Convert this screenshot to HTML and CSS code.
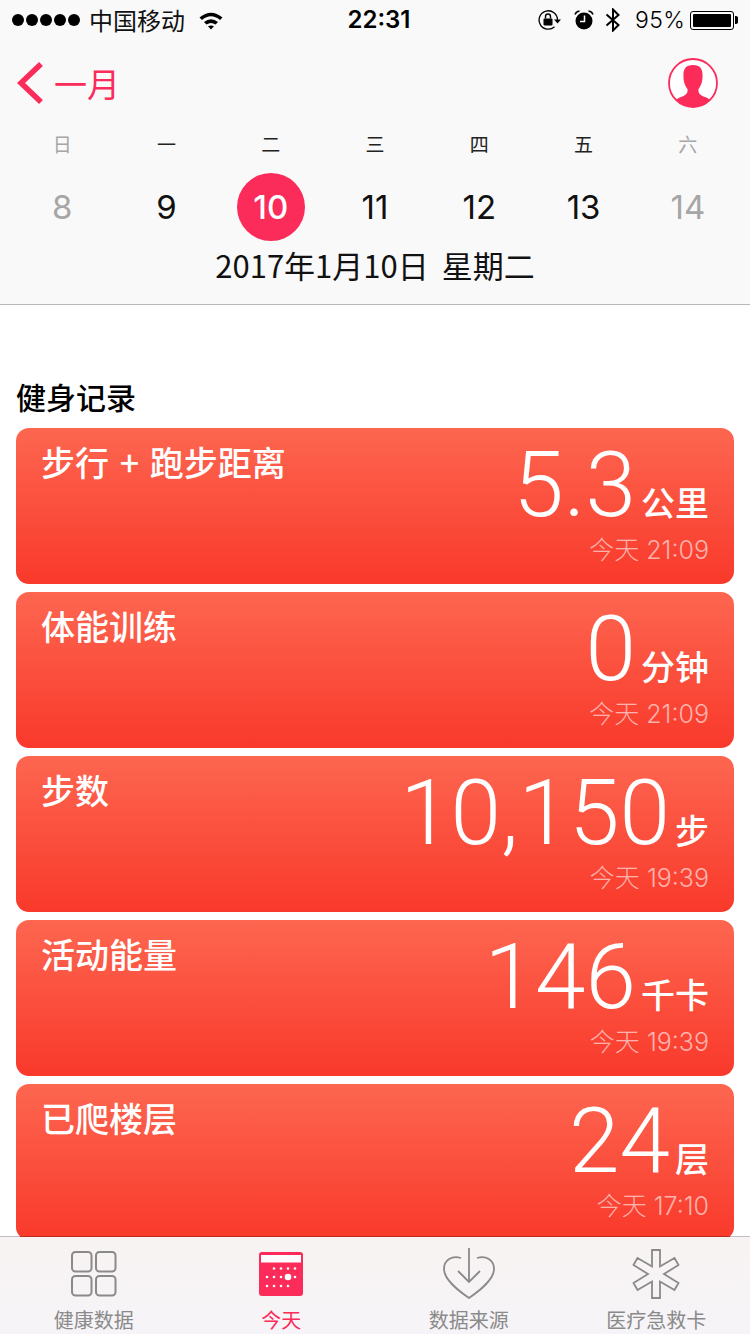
FILE: index.html
```html
<!DOCTYPE html>
<html lang="zh">
<head>
    <meta charset="UTF-8">
    <meta name="viewport" content="width=device-width, initial-scale=1.0">
    <title>健康</title>
    <link rel="stylesheet" href="styles.css">
</head>
<body>

<div id="phone">
    <!-- Top part: status bar, month nav, week -->
    <div class="header">
        <div class="status">
            <div class="status-left">
                <div class="dots"><i></i><i></i><i></i><i></i><i></i></div>
                <span class="carrier">中国移动</span>
                <svg class="wifi" width="26" height="20" viewBox="0 0 26 20">
                    <path d="M1.5 7.5 Q13 -2 24.5 7.5 L22 10 Q13 2.5 4 10Z" fill="#000"/>
                    <path d="M6 12 Q13 6.5 20 12 L17.5 14.5 Q13 11.5 8.500 14.500Z" fill="#000"/>
                    <path d="M10 16.300 Q13 14.500 16 16.300 L13 19.500Z" fill="#000"/>
                </svg>
            </div>
            <div class="clock">22:31</div>
            <div class="status-right">
                <svg width="24" height="22" viewBox="0 0 24 22">
                    <path d="M19.500 11 A9.200 9.200 0 1 0 16.500 17.800" fill="none" stroke="#000" stroke-width="1.300"/>
                    <path d="M16 10.500 H23 L19.500 14.500Z" fill="#000"/>
                    <rect x="5.500" y="9.500" width="9" height="7" rx="1" fill="#000"/>
                    <path d="M7.500 9.500 V7.500 A2.500 2.500 0 0 1 12.500 7.500 V9.500" fill="none" stroke="#000" stroke-width="1.400"/>
                </svg>
                <svg class="alarm" width="20" height="20" viewBox="0 0 20 20">
                    <circle cx="10" cy="11" r="8.500" fill="#000"/>
                    <path d="M10.500 5.500 V11.500 H6" fill="none" stroke="#fff" stroke-width="1.500"/>
                    <path d="M1 4.500 Q2 1.500 5.500 1 M19 4.500 Q18 1.500 14.500 1" fill="none" stroke="#000" stroke-width="1.500"/>
                </svg>
                <svg class="bt" width="16" height="24" viewBox="0 0 16 24">
                    <path d="M1.500 6.500 L13.500 17 L8 22.500 V1.500 L13.500 7 L1.500 17.500" fill="none" stroke="#000" stroke-width="2"/>
                </svg>
                <span class="percent">95%</span>
                <div class="battery"><div class="battery-fill"></div></div>
                <div class="battery-tip"></div>
            </div>
        </div>

        <div class="nav">
            <div class="back">
                <svg width="28" height="44" viewBox="0 0 28 44">
                    <path d="M25 3 L5 22 L25 41" fill="none" stroke="#fb2b5a" stroke-width="5.500"/>
                </svg>
                <span>一月</span>
            </div>
            <svg class="avatar" width="50" height="50" viewBox="0 0 50 50">
                <defs><clipPath id="round"><circle cx="25" cy="25" r="24"/></clipPath></defs>
                <circle cx="25" cy="25" r="24" fill="#fff" stroke="#fb2b5a" stroke-width="1.800"/>
                <path clip-path="url(#round)" d="M25 7 C33 7 35 12 34.500 19 C34.500 25 32 29 30.500 31 C30 35 32 37 37 39 C41 40.500 44 42 46 50 H4 C6 42 9 40.500 13 39 C18 37 20 35 19.500 31 C18 29 15.500 25 15.500 19 C15 12 17 7 25 7Z" fill="#fb2b5a"/>
            </svg>
        </div>

        <div class="week">
            <div class="day off"><span class="wd">日</span><span class="num">8</span></div>
            <div class="day"><span class="wd">一</span><span class="num">9</span></div>
            <div class="day"><span class="wd">二</span><span class="num today">10</span></div>
            <div class="day"><span class="wd">三</span><span class="num">11</span></div>
            <div class="day"><span class="wd">四</span><span class="num">12</span></div>
            <div class="day"><span class="wd">五</span><span class="num">13</span></div>
            <div class="day off"><span class="wd">六</span><span class="num">14</span></div>
        </div>
        <div class="full-date">2017年1月10日 星期二</div>
    </div>

    <!-- Cards -->
    <div class="content">
        <h2>健身记录</h2>
        <div class="card">
            <div class="card-title">步行 + 跑步距离</div>
            <div class="card-right">
                <div class="value"><b>5.3</b><span>公里</span></div>
                <div class="time">今天 21:09</div>
            </div>
        </div>
        <div class="card">
            <div class="card-title">体能训练</div>
            <div class="card-right">
                <div class="value"><b>0</b><span>分钟</span></div>
                <div class="time">今天 21:09</div>
            </div>
        </div>
        <div class="card">
            <div class="card-title">步数</div>
            <div class="card-right">
                <div class="value"><b>10,150</b><span>步</span></div>
                <div class="time">今天 19:39</div>
            </div>
        </div>
        <div class="card">
            <div class="card-title">活动能量</div>
            <div class="card-right">
                <div class="value"><b>146</b><span>千卡</span></div>
                <div class="time">今天 19:39</div>
            </div>
        </div>
        <div class="card">
            <div class="card-title">已爬楼层</div>
            <div class="card-right">
                <div class="value"><b>24</b><span>层</span></div>
                <div class="time">今天 17:10</div>
            </div>
        </div>
    </div>

    <!-- Bottom tabs -->
    <div class="tabs">
        <div class="tab">
            <div class="tab-icon">
                <svg width="46" height="46" viewBox="0 0 46 46">
                    <g fill="none" stroke="#8a8a8a" stroke-width="2">
                        <rect x="1" y="1" width="19.500" height="19.500" rx="3.500"/>
                        <rect x="25" y="1" width="19.500" height="19.500" rx="3.500"/>
                        <rect x="1" y="25" width="19.500" height="19.500" rx="3.500"/>
                        <rect x="25" y="25" width="19.500" height="19.500" rx="3.500"/>
                    </g>
                </svg>
            </div>
            <span>健康数据</span>
        </div>
        <div class="tab active">
            <div class="tab-icon">
                <svg width="46" height="46" viewBox="0 0 46 46">
                    <rect x="1" y="1" width="44" height="44" rx="3" fill="#fb2b5a"/>
                    <rect x="3" y="4" width="40" height="7.500" fill="#fff"/>
                    <g fill="#fff">
                        <circle cx="16" cy="17.500" r="1.300"/><circle cx="23" cy="17.500" r="1.300"/><circle cx="30" cy="17.500" r="1.300"/><circle cx="37" cy="17.500" r="1.300"/>
                        <circle cx="9" cy="26" r="1.300"/><circle cx="16" cy="26" r="1.300"/><circle cx="23" cy="26" r="1.300"/><circle cx="30" cy="26" r="3.300"/><circle cx="37" cy="26" r="1.300"/>
                        <circle cx="9" cy="35" r="1.300"/><circle cx="16" cy="35" r="1.300"/><circle cx="23" cy="35" r="1.300"/><circle cx="30" cy="35" r="1.300"/>
                    </g>
                </svg>
            </div>
            <span>今天</span>
        </div>
        <div class="tab">
            <div class="tab-icon">
                <svg width="54" height="52" viewBox="0 0 54 52">
                    <path d="M19 10 C10 7 2 12 2 21 C2 32 17 43 27 50 C37 43 52 32 52 21 C52 12 44 7 35 10" fill="none" stroke="#8a8a8a" stroke-width="1.800"/>
                    <path d="M27 0 V34 M16 23 L27 34 L38 23" fill="none" stroke="#8a8a8a" stroke-width="1.800"/>
                </svg>
            </div>
            <span>数据来源</span>
        </div>
        <div class="tab">
            <div class="tab-icon">
                <svg width="50" height="50" viewBox="0 0 50 50">
                    <path d="M21 1 H29 V17.500 L43.500 9 L47.500 16 L33 25 L47.500 34 L43.500 41 L29 32.500 V49 H21 V32.500 L6.500 41 L2.500 34 L17 25 L2.500 16 L6.500 9 L21 17.500Z" fill="none" stroke="#8a8a8a" stroke-width="1.800"/>
                </svg>
            </div>
            <span>医疗急救卡</span>
        </div>
    </div>
</div>

</body>
</html>
```

FILE: styles.css
```css
* {
    box-sizing: border-box;
}
body {
    margin: 0;
    background-color: #fff;
    font-family: "Noto Sans CJK SC", "Noto Sans", sans-serif;
}
#phone {
    position: relative;
    width: 750px;
    height: 1334px;
    overflow: hidden;
}
.header {
    height: 305px;
    background-color: #f9f9f9;
    border-bottom: 1px solid #b8b8b8;
}
.status {
    height: 40px;
    padding: 0 12px;
    display: flex;
    align-items: center;
    position: relative;
}
.status-left {
    display: flex;
    align-items: center;
}
.dots {
    display: flex;
    gap: 2px;
}
.dots i {
    width: 12px;
    height: 12px;
    border-radius: 50%;
    background-color: #000;
}
.carrier {
    margin-left: 9px;
    font-size: 24px;
    line-height: 38px;
    color: #111;
}
.wifi {
    margin-left: 13px;
}
.clock {
    position: absolute;
    left: 0;
    right: 0;
    top: 0;
    text-align: center;
    font-family: Inter, sans-serif;
    font-size: 24px;
    font-weight: 600;
    line-height: 40px;
    margin-left: 8px;
}
.status-right {
    margin-left: auto;
    display: flex;
    align-items: center;
}
.alarm {
    margin-left: 12px;
}
.bt {
    margin-left: 11px;
}
.percent {
    margin-left: 14px;
    font-family: Inter, sans-serif;
    font-size: 23px;
    font-weight: 300;
    color: #000;
    letter-spacing: 0.3px;
}
.battery {
    margin-left: 5px;
    width: 44px;
    height: 19px;
    border: 1px solid #000;
    border-radius: 3px;
    padding: 2px;
}
.battery-fill {
    height: 100%;
    background-color: #000;
    border-radius: 1px;
}
.battery-tip {
    width: 3px;
    height: 8px;
    margin-left: 1px;
    background-color: #000;
    border-radius: 0 2px 2px 0;
}
.nav {
    height: 78px;
    padding: 7px 32px 0 16px;
    display: flex;
    justify-content: space-between;
    align-items: center;
}
.back {
    display: flex;
    align-items: center;
    color: #fb2b5a;
    font-size: 33px;
}
.back span {
    margin-left: 10px;
    line-height: 44px;
}
.week {
    display: flex;
    justify-content: space-between;
    padding: 0 10px;
    margin-top: 14px;
}
.day {
    width: 104.300px;
    display: flex;
    flex-direction: column;
    align-items: center;
}
.wd {
    font-size: 19px;
    line-height: 24px;
    color: #222;
}
.num {
    margin-top: 17px;
    width: 68px;
    height: 68px;
    border-radius: 50%;
    display: flex;
    align-items: center;
    justify-content: center;
    font-family: Inter, sans-serif;
    font-size: 33px;
    color: #111;
}
.today {
    background-color: #fb2b5a;
    color: #fff;
    font-weight: 500;
}
.off .wd, .off .num {
    color: #a6a6a6;
}
.full-date {
    margin-top: 4px;
    text-align: center;
    font-size: 31px;
    line-height: 40px;
    word-spacing: 6px;
    color: #111;
}
.content {
    padding: 0 16px;
}
.content h2 {
    margin: 69px 0 0;
    font-size: 30px;
    font-weight: 500;
    line-height: 44px;
    color: #000;
}
.card {
    height: 156px;
    margin-top: 8px;
    border-radius: 13px;
    padding: 12px 25px 0;
    display: flex;
    justify-content: space-between;
    color: #fff;
    background: linear-gradient(to bottom, #fd6650, #f9392b);
}
.content h2 + .card {
    margin-top: 10px;
}
.card-title {
    font-size: 34px;
    font-weight: 500;
    line-height: 44px;
    word-spacing: 3px;
}
.card-right {
    display: flex;
    flex-direction: column;
    align-items: flex-end;
}
.value {
    display: flex;
    align-items: baseline;
    line-height: 84px;
    margin-top: 3px;
}
.value b {
    font-family: Roboto, sans-serif;
    font-size: 91px;
    font-weight: 300;
}
.value span {
    margin-left: 5px;
    font-size: 34px;
    font-weight: 500;
}
.time {
    margin-top: -11px;
    font-family: Inter, "Noto Sans CJK SC", sans-serif;
    font-size: 25px;
    font-weight: 300;
    line-height: 34px;
    color: rgba(255, 255, 255, 0.6);
}
.tabs {
    position: absolute;
    left: 0;
    right: 0;
    bottom: 0;
    height: 98px;
    display: grid;
    grid-template-columns: repeat(4, 1fr);
    background: linear-gradient(to bottom, #f8f3f2, #f6f4f8);
    background-clip: padding-box;
    border-top: 1px solid rgba(0, 0, 0, 0.25);
}
.tab {
    position: relative;
    display: flex;
    flex-direction: column;
    align-items: center;
    padding-top: 11px;
    color: #8a8a8a;
}
.tab-icon {
    height: 52px;
    display: flex;
    align-items: center;
    justify-content: center;
}
.tab span {
    position: absolute;
    bottom: -1px;
    font-size: 20px;
    line-height: 30px;
    white-space: nowrap;
}
.tab.active {
    color: #fb2b5a;
}
```
